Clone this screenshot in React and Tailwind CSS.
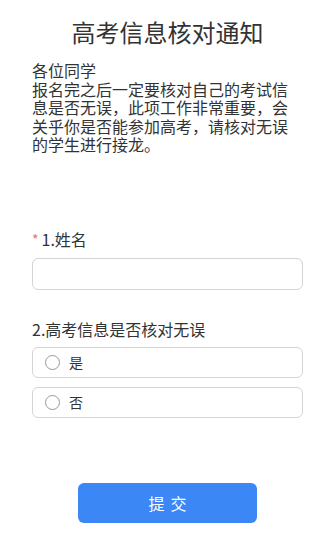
export default function App() {
  return (
    <div
      className="w-[335px] min-h-[540px] bg-white px-8 text-[#333]"
      style={{ fontFamily: '"Noto Sans CJK SC", "Noto Sans", sans-serif' }}
    >
      <h1 className="pt-[14px] text-center text-[24px] leading-[36px] font-normal text-[#333]">高考信息核对通知</h1>

      <div className="mt-[11px] text-[16px] leading-[18.6px]">
        <p>各位同学</p>
        <p>报名完之后一定要核对自己的考试信息是否无误，此项工作非常重要，会关乎你是否能参加高考，请核对无误的学生进行接龙。</p>
      </div>

      {/* 题目 1 */}
      <div className="mt-[73px]">
        <div className="flex items-center text-[16px] leading-[24px]">
          <span className="mr-[3px] text-[14px] text-[#f56c6c]">*</span>
          <span>1.姓名</span>
        </div>
        <input
          type="text"
          className="mt-[7px] block h-[32px] w-full rounded-[6px] border border-[#d4d4d4] px-3 text-[14px] outline-none"
        />
      </div>

      {/* 题目 2 */}
      <div className="mt-[27px]">
        <div className="text-[16px] leading-[24px]">2.高考信息是否核对无误</div>
        <div className="mt-[6px] flex flex-col gap-[9px]">
          {['是', '否'].map((opt) => (
            <label
              key={opt}
              className="flex h-[31px] items-center rounded-[6px] border border-[#d4d4d4] pl-[12px] text-[14px]"
            >
              <span className="h-[15px] w-[15px] rounded-full border border-[#999]" />
              <span className="ml-[9px]">{opt}</span>
            </label>
          ))}
        </div>
      </div>

      <div className="mt-[65px] flex justify-center pb-4">
        <button className="h-[40px] w-[179px] rounded-[6px] bg-[#3a87f5] pl-[6px] text-[16px] tracking-[6px] text-white">
          提交
        </button>
      </div>
    </div>
  )
}
